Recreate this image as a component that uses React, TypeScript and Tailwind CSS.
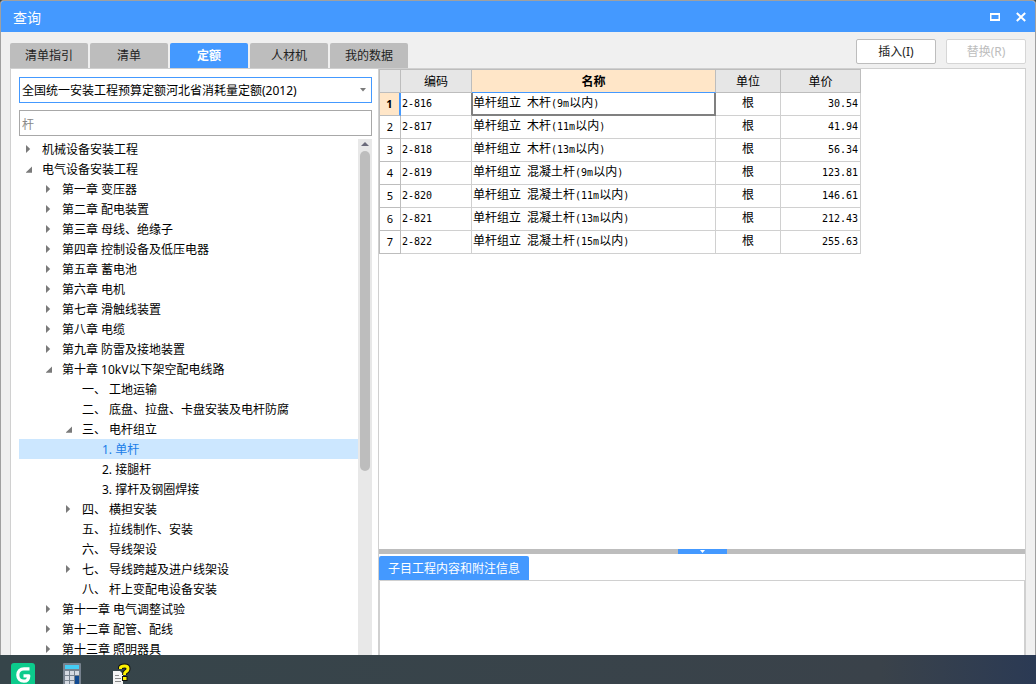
import React from 'react'
import clsx from 'clsx'

type TreeNode = {
  level: number
  label: string
  state?: 'open' | 'closed'
  selected?: boolean
}

const TABS = ['清单指引', '清单', '定额', '人材机', '我的数据']

const TREE: TreeNode[] = [
  { level: 0, label: '机械设备安装工程', state: 'closed' },
  { level: 0, label: '电气设备安装工程', state: 'open' },
  { level: 1, label: '第一章 变压器', state: 'closed' },
  { level: 1, label: '第二章 配电装置', state: 'closed' },
  { level: 1, label: '第三章 母线、绝缘子', state: 'closed' },
  { level: 1, label: '第四章 控制设备及低压电器', state: 'closed' },
  { level: 1, label: '第五章 蓄电池', state: 'closed' },
  { level: 1, label: '第六章 电机', state: 'closed' },
  { level: 1, label: '第七章 滑触线装置', state: 'closed' },
  { level: 1, label: '第八章 电缆', state: 'closed' },
  { level: 1, label: '第九章 防雷及接地装置', state: 'closed' },
  { level: 1, label: '第十章 10kV以下架空配电线路', state: 'open' },
  { level: 2, label: '一、 工地运输' },
  { level: 2, label: '二、 底盘、拉盘、卡盘安装及电杆防腐' },
  { level: 2, label: '三、 电杆组立', state: 'open' },
  { level: 3, label: '1. 单杆', selected: true },
  { level: 3, label: '2. 接腿杆' },
  { level: 3, label: '3. 撑杆及钢圈焊接' },
  { level: 2, label: '四、 横担安装', state: 'closed' },
  { level: 2, label: '五、 拉线制作、安装' },
  { level: 2, label: '六、 导线架设' },
  { level: 2, label: '七、 导线跨越及进户线架设', state: 'closed' },
  { level: 2, label: '八、 杆上变配电设备安装' },
  { level: 1, label: '第十一章 电气调整试验', state: 'closed' },
  { level: 1, label: '第十二章 配管、配线', state: 'closed' },
  { level: 1, label: '第十三章 照明器具', state: 'closed' },
]

const INDENT = ['pl-[7px]', 'pl-[27px]', 'pl-[47px]', 'pl-[67px]']

const ROWS = [
  ['2-816', '单杆组立 木杆(9m以内)', '根', '30.54'],
  ['2-817', '单杆组立 木杆(11m以内)', '根', '41.94'],
  ['2-818', '单杆组立 木杆(13m以内)', '根', '56.34'],
  ['2-819', '单杆组立 混凝土杆(9m以内)', '根', '123.81'],
  ['2-820', '单杆组立 混凝土杆(11m以内)', '根', '146.61'],
  ['2-821', '单杆组立 混凝土杆(13m以内)', '根', '212.43'],
  ['2-822', '单杆组立 混凝土杆(15m以内)', '根', '255.63'],
]

// Latin runs are set half as wide as the Chinese characters
function GridText({ text }: { text: string }) {
  return (
    <>
      {text.split(/([\x20-\x7e]+)/).map((part, i) =>
        i % 2 === 1 ? (
          <span key={i} className="whitespace-pre font-['DejaVu_Sans_Mono',monospace] text-[10px] leading-none">{part}</span>
        ) : (
          part
        )
      )}
    </>
  )
}

function TreeArrow({ state }: { state?: 'open' | 'closed' }) {
  return (
    <svg className="size-2 shrink-0" viewBox="0 0 8 8" fill="#7a7a7a" aria-hidden="true">
      {state === 'closed' && <path d="M0 0 L4.2 4 L0 8 Z" />}
      {state === 'open' && <path d="M6 1.5 V7.7 H-0.5 Z" />}
    </svg>
  )
}

function TitleBar() {
  return (
    <header className="flex h-[31px] shrink-0 items-center justify-between bg-[#4499ff] pr-[9px] pl-3 text-white">
      <h1 className="pt-[2px] text-[14px] leading-5">查询</h1>
      <div className="flex gap-4">
        <button type="button" aria-label="最大化">
          <svg className="size-[10px]" viewBox="0 0 10 10" fill="none" stroke="currentColor">
            <path d="M0 2 H10 M0 8 H10" strokeWidth="2" />
            <path d="M0.75 1 V9 M9.25 1 V9" strokeWidth="1.5" />
          </svg>
        </button>
        <button type="button" aria-label="关闭">
          <svg className="size-[10px]" viewBox="0 0 10 10" fill="none" stroke="currentColor" strokeWidth="2">
            <path d="M0.8 1 L9.2 9 M9.2 1 L0.8 9" />
          </svg>
        </button>
      </div>
    </header>
  )
}

function Toolbar() {
  return (
    <div className="flex h-9 shrink-0 items-end justify-between">
      <div role="tablist" className="flex gap-[2px] pl-[9px]">
        {TABS.map((tab) => (
          <button
            key={tab}
            type="button"
            role="tab"
            aria-selected={tab === '定额'}
            className={clsx(
              'h-[25px] w-[78px] rounded-t-[2px]',
              tab === '定额' ? 'bg-[#4499ff] font-bold text-white' : 'bg-[#bdbdbd] text-[#222]'
            )}
          >
            {tab}
          </button>
        ))}
      </div>
      <div className="flex gap-[10px] pr-[9px] pb-1">
        <button type="button" className="h-[25px] w-20 rounded-[2px] border border-[#bdbdbd] bg-white text-[#222]">
          插入(I)
        </button>
        <button type="button" disabled className="h-[25px] w-20 rounded-[2px] border border-[#d6d6d6] bg-white text-[#bdbdbd]">
          替换(R)
        </button>
      </div>
    </div>
  )
}

function Sidebar() {
  return (
    <aside className="flex w-[367px] shrink-0 flex-col pt-2 pr-[6px] pl-2">
      <div className="relative">
        <select
          aria-label="定额库"
          className="block h-[26px] w-full appearance-none border border-[#4499ff] bg-white pt-[2px] pl-[2px] text-black"
        >
          <option>全国统一安装工程预算定额河北省消耗量定额(2012)</option>
        </select>
        <svg className="pointer-events-none absolute top-[11px] right-[6px] h-1 w-[6px]" viewBox="0 0 6 4" fill="#7a7a7a">
          <path d="M0 0 H6 L3 3.5 Z" />
        </svg>
      </div>
      <input
        type="text"
        aria-label="搜索"
        defaultValue="杆"
        className="mt-[7px] h-[26px] w-full border border-[#a8a8a8] bg-white px-[2px] pt-[2px] text-[#888]"
      />
      <div className="mt-[3px] flex min-h-0 flex-1 overflow-hidden">
        <ul role="tree" className="min-w-0 flex-1">
          {TREE.map((node) => (
            <li
              key={node.label}
              role="treeitem"
              aria-level={node.level + 1}
              aria-selected={!!node.selected}
              className={clsx(
                'flex h-5 items-center gap-2 whitespace-pre',
                INDENT[node.level],
                node.selected ? 'bg-[#cce7ff] text-[#1a7de8]' : 'text-black'
              )}
            >
              <TreeArrow state={node.state} />
              <span className="pt-[2px]">{node.label}</span>
            </li>
          ))}
        </ul>
        <div className="flex w-[14px] shrink-0 flex-col items-center bg-[#e8e8e8]">
          <svg className="my-[3px] h-[6px] w-2 shrink-0" viewBox="0 0 8 6" fill="#6b6b7b">
            <path d="M0 4 L4 0 L8 4 Z" />
          </svg>
          <div className="h-80 w-[10px] shrink-0 rounded-full bg-[#bdbdbd]" />
        </div>
      </div>
    </aside>
  )
}

function QuotaTable() {
  const head = 'h-6 border-t border-r border-b border-[#bdbdbd] bg-[#e6e6e6] p-0 pt-[2px] font-normal'
  const cell = 'h-[23px] border-r border-b border-[#d0d0d0] p-0 pb-[2px]'
  return (
    <table className="w-[482px] table-fixed border-separate border-spacing-0 text-black">
      <colgroup>
        <col className="w-[22px]" />
        <col className="w-[71px]" />
        <col className="w-[244px]" />
        <col className="w-[65px]" />
        <col className="w-[80px]" />
      </colgroup>
      <thead>
        <tr>
          <th className={clsx(head, 'border-l')} aria-label="序号" />
          <th className={head}>编码</th>
          <th className="h-6 border-t border-r border-b border-t-[#bdbdbd] border-r-[#bdbdbd] border-b-[#4499ff] bg-[#ffe6c8] p-0 pt-[2px] font-bold">
            名称
          </th>
          <th className={head}>单位</th>
          <th className={head}>单价</th>
        </tr>
      </thead>
      <tbody>
        {ROWS.map(([code, name, unit, price], i) => (
          <tr key={code}>
            <th
              className={clsx(
                'h-[23px] border-b border-l border-[#bdbdbd] p-0 text-[11px]',
                i === 0
                  ? 'border-r-2 border-r-[#4499ff] bg-[#ffe6c8] font-bold'
                  : 'border-r bg-white font-normal'
              )}
            >
              {i + 1}
            </th>
            <td className={clsx(cell, 'pl-px', i === 0 && 'border-r-[#808080]')}>
              <GridText text={code} />
            </td>
            <td
              className={clsx(
                i === 0 ? 'h-[23px] border-r-2 border-b-2 border-l border-[#808080] p-0 pb-px' : [cell, 'pl-px']
              )}
            >
              <GridText text={name} />
            </td>
            <td className={clsx(cell, 'text-center')}>{unit}</td>
            <td className={clsx(cell, 'pr-[2px] text-right')}>
              <GridText text={price} />
            </td>
          </tr>
        ))}
      </tbody>
    </table>
  )
}

function Taskbar() {
  return (
    <footer className="flex h-[29px] shrink-0 items-start overflow-hidden bg-linear-to-r from-[#36454a] via-[#3a424a] via-85% to-[#2b3a54] pt-2 pl-[11px]">
      <svg className="size-6 shrink-0" viewBox="0 0 24 24" aria-label="广联达">
        <rect width="24" height="24" rx="3" fill="#0ccb8c" />
        <path
          d="M18.5 5.8 H13 C9 5.8 6.8 8.6 6.8 12 C6.8 15.4 9 18.2 13 18.2 C16 18.2 17.6 16.2 17.8 12.8 H12.5"
          fill="none"
          stroke="#fff"
          strokeWidth="3.2"
          strokeLinejoin="round"
        />
      </svg>
      <svg className="ml-7 h-6 w-[18px] shrink-0" viewBox="0 0 18 24" aria-label="计算器">
        <rect width="18" height="24" rx="1" fill="#77828e" />
        <rect x="2" y="2" width="14" height="4" fill="#45cdf5" />
        <g fill="#d5dae2">
          <rect x="2" y="8" width="4" height="4" />
          <rect x="7" y="8" width="4" height="4" />
          <rect x="12" y="8" width="4" height="4" />
          <rect x="2" y="13" width="4" height="4" />
          <rect x="7" y="13" width="4" height="4" />
          <rect x="2" y="18" width="4" height="4" />
          <rect x="7" y="18" width="4" height="4" />
        </g>
        <rect x="12" y="13" width="4" height="9" fill="#104a92" />
      </svg>
      <svg className="ml-8 h-6 w-[18px] shrink-0" viewBox="0 0 18 24" aria-label="帮助">
        <path d="M0 8 H7 L10 11 V24 H0 Z" fill="#f5f5f5" />
        <path d="M2 12.5 H6 M2 15.5 H8 M2 18.5 H8" stroke="#8b8b8b" />
        <path d="M7.5 6 V4.5 Q8 3 11.5 3 Q15 3 15 5.5 Q15 8 12.5 9 Q11.5 9.6 11.5 12" fill="none" stroke="#111" strokeWidth="5" />
        <rect x="9" y="13" width="5.5" height="5" fill="#111" />
        <path d="M7.5 6 V4.5 Q8 3 11.5 3 Q15 3 15 5.5 Q15 8 12.5 9 Q11.5 9.6 11.5 12" fill="none" stroke="#fff200" strokeWidth="3" />
        <rect x="10" y="14" width="3.5" height="3" fill="#fff200" />
      </svg>
    </footer>
  )
}

export default function App() {
  return (
    <div className="flex h-screen flex-col bg-[#36454a] font-['Noto_Sans','Noto_Sans_CJK_SC',sans-serif] text-[12px] leading-4">
      <div className="flex min-h-0 flex-1 flex-col overflow-hidden rounded-t-[4px] border-x border-t border-[#a0a0a0] bg-[#f0f0f0]">
        <TitleBar />
        <Toolbar />
        <main className="mx-[9px] flex min-h-0 flex-1 border-x border-t border-[#d0d0d0] bg-white">
          <Sidebar />
          <section className="flex min-w-0 flex-1 flex-col border-l border-[#d0d0d0]">
            <div className="min-h-0 flex-1 overflow-hidden">
              <QuotaTable />
            </div>
            <div className="flex h-[5px] shrink-0 justify-center bg-[#bdbdbd]">
              <button type="button" aria-label="折叠" className="flex h-[5px] w-[49px] items-center justify-center bg-[#4499ff]">
                <svg className="h-[3px] w-[5px]" viewBox="0 0 5 3" fill="#fff">
                  <path d="M0 0 H5 L2.5 3 Z" />
                </svg>
              </button>
            </div>
            <div role="tablist" className="mt-[2px] flex shrink-0">
              <button type="button" role="tab" aria-selected="true" className="h-6 w-[150px] rounded-t-[2px] bg-[#4499ff] pt-[2px] text-white">
                子目工程内容和附注信息
              </button>
            </div>
            <div role="tabpanel" className="h-[75px] shrink-0 border-x border-t border-[#d0d0d0]" />
          </section>
        </main>
      </div>
      <Taskbar />
    </div>
  )
}
